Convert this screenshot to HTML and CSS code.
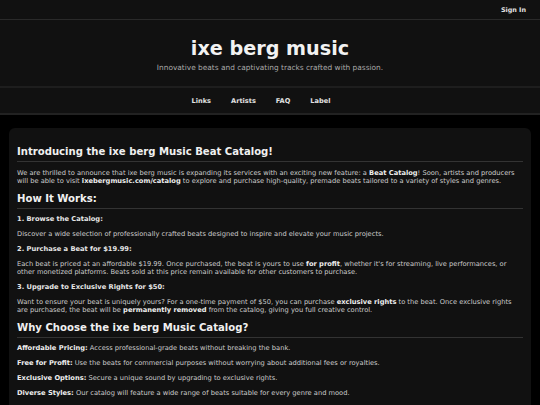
FILE: index.html
```html
<!DOCTYPE html>
<html lang="en">
<head>
<meta charset="utf-8">
<title>ixe berg music</title>
<link rel="stylesheet" href="styles.css">
</head>
<body>
<div class="topbar"><a class="signin" href="#">Sign In</a></div>
<header class="hero">
  <h1 class="brand">ixe berg music</h1>
  <p class="tagline">Innovative beats and captivating tracks crafted with passion.</p>
</header>
<nav class="nav">
  <a href="#">Links</a>
  <a href="#">Artists</a>
  <a href="#">FAQ</a>
  <a href="#">Label</a>
</nav>
<main class="main">
  <article class="card">
    <h2 class="h1">Introducing the ixe berg Music Beat Catalog!</h2>
    <p>We are thrilled to announce that ixe berg music is expanding its services with an exciting new feature: a <strong>Beat Catalog</strong>! Soon, artists and producers will be able to visit <strong>ixebergmusic.com/catalog</strong> to explore and purchase high-quality, premade beats tailored to a variety of styles and genres.</p>
    <h2 class="h2">How It Works:</h2>
    <h3>1. Browse the Catalog:</h3>
    <p>Discover a wide selection of professionally crafted beats designed to inspire and elevate your music projects.</p>
    <h3>2. Purchase a Beat for $19.99:</h3>
    <p>Each beat is priced at an affordable $19.99. Once purchased, the beat is yours to use <strong>for profit</strong>, whether it's for streaming, live performances, or other monetized platforms. Beats sold at this price remain available for other customers to purchase.</p>
    <h3>3. Upgrade to Exclusive Rights for $50:</h3>
    <p>Want to ensure your beat is uniquely yours? For a one-time payment of $50, you can purchase <strong>exclusive rights</strong> to the beat. Once exclusive rights are purchased, the beat will be <strong>permanently removed</strong> from the catalog, giving you full creative control.</p>
    <h2 class="h2">Why Choose the ixe berg Music Catalog?</h2>
    <p><strong>Affordable Pricing:</strong> Access professional-grade beats without breaking the bank.</p>
    <p><strong>Free for Profit:</strong> Use the beats for commercial purposes without worrying about additional fees or royalties.</p>
    <p><strong>Exclusive Options:</strong> Secure a unique sound by upgrading to exclusive rights.</p>
    <p><strong>Diverse Styles:</strong> Our catalog will feature a wide range of beats suitable for every genre and mood.</p>
  </article>
</main>
</body>
</html>
```
FILE: styles.css
```css
html, body {
  margin: 0;
  padding: 0;
  background: #000;
  color: #ccc;
  font-family: "DejaVu Sans", Verdana, sans-serif;
  font-size: 6.7px;
  line-height: 8px;
}
a { color: #e2e2e2; text-decoration: none; font-weight: bold; }
.topbar {
  height: 19px;
  background: #111;
  border-bottom: 1px solid #2a2a2a;
  display: flex;
  justify-content: flex-end;
  align-items: center;
  padding: 0 14px;
}
.signin { font-size: 6.4px; }
.hero {
  background: #111;
  text-align: center;
  padding: 17px 0 14px;
  border-bottom: 2px solid #1e1e1e;
}
.brand {
  margin: 0;
  font-size: 19.2px;
  line-height: 23px;
  color: #f2f2f2;
}
.tagline {
  margin: 3px 0 0;
  color: #aaa;
  font-size: 7.4px;
  line-height: 9px;
}
.nav {
  background: #111;
  border-bottom: 2px solid #222;
  display: flex;
  justify-content: center;
  gap: 20px;
  padding: 9px 18px 8px 0;
}
.nav a { font-size: 6.6px; }
.main {
  padding: 13px 9px 0 9px;
}
.card {
  background: #111;
  border-radius: 6px;
  padding: 10px 8px 8px;
}
.card p { margin: 0 0 7px; }
.card strong { color: #eee; }
.h1, .h2 {
  color: #f0f0f0;
  padding-bottom: 3px;
  border-bottom: 1.5px solid #333;
  font-size: 10.1px;
  line-height: 12px;
}
.h1 { margin: 8px 0 7px; }
.h2 { margin: 8px 0 6px; }
.list p { margin-bottom: 7.3px; }
.card h3 {
  font-size: 6.7px;
  line-height: 8px;
  color: #e6e6e6;
  margin: 0 0 7px;
}
```
